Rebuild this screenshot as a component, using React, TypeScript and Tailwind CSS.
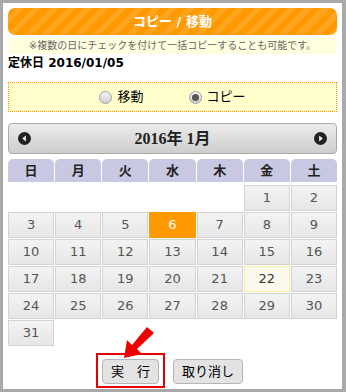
import React from "react";

const jp = "font-['DejaVu_Sans','Noto_Sans_CJK_JP',sans-serif]";

function Radio({ checked }: { checked: boolean }) {
  return (
    <span className="relative inline-flex h-[13px] w-[13px] items-center justify-center rounded-full border border-[#a0a0a0] bg-[linear-gradient(#f4f4f4,#cfcfcf)]">
      {checked && <span className="h-[7px] w-[7px] rounded-full bg-[#555]" />}
    </span>
  );
}

function Arrow({ dir }: { dir: "l" | "r" }) {
  return (
    <svg width="13" height="13" viewBox="0 0 13 13">
      <circle cx="6.5" cy="6.5" r="6.5" fill="#222" />
      {dir === "l" ? (
        <polygon points="7.8,3.6 4.3,6.5 7.8,9.4" fill="#fff" />
      ) : (
        <polygon points="5.2,3.6 8.7,6.5 5.2,9.4" fill="#fff" />
      )}
    </svg>
  );
}

export default function App() {
  const weekdays = ["日", "月", "火", "水", "木", "金", "土"];
  const cells: (number | null)[] = [null, null, null, null, null];
  for (let i = 1; i <= 31; i++) cells.push(i);

  return (
    <div className={`w-[346px] h-[392px] bg-white border-t-[3px] border-l-[3px] border-b-[3px] border-r-[4px] border-[#a9a9a9] pl-[5px] pr-[5px] pt-[5px] relative ${jp}`}>
      {/* header */}
      <div className="h-[27px] rounded-[7px] bg-[image:repeating-linear-gradient(135deg,#ff9900_0px,#ff9900_6px,#ffa41f_6px,#ffa41f_12px)] flex items-center justify-center text-white font-bold text-[13px]">
        コピー / 移動
      </div>
      {/* notice */}
      <div className="mt-[3px] h-[16px] bg-[#ffffe0] flex items-center justify-center text-[10px] text-[#666] leading-none">
        ※複数の日にチェックを付けて一括コピーすることも可能です。
      </div>
      <div className="mt-[2px] text-[12px] font-bold text-black leading-[14px]">
        定休日 2016/01/05
      </div>
      {/* radio box */}
      <div className="mt-[12px] h-[30px] border border-dotted border-[#ff9900] bg-[#ffffcc] flex items-center justify-center gap-[45px] text-[13px] text-black">
        <label className="flex items-center gap-[5px]">
          <Radio checked={false} />
          <span>移動</span>
        </label>
        <label className="flex items-center gap-[5px]">
          <Radio checked={true} />
          <span>コピー</span>
        </label>
      </div>
      {/* calendar header */}
      <div className="mt-[11px] h-[31px] rounded-[4px] border border-[#aaaaaa] bg-[linear-gradient(#ececec,#cdcdcd)] flex items-center justify-between px-[9px]">
        <Arrow dir="l" />
        <span className="font-['Liberation_Serif','Noto_Sans_CJK_JP',serif] font-bold text-[16px] text-[#222]">
          2016年 1月
        </span>
        <Arrow dir="r" />
      </div>
      {/* weekdays */}
      <div className="mt-[5px] grid grid-cols-7 gap-x-[1px]">
        {weekdays.map((w) => (
          <div
            key={w}
            className="h-[23px] rounded-t-[5px] bg-[#c8c8e2] flex items-center justify-center text-[13px] font-bold text-[#222]"
          >
            {w}
          </div>
        ))}
      </div>
      {/* days */}
      <div className="mt-[3px] grid grid-cols-7 gap-x-[1px] gap-y-[1px]">
        {cells.map((d, i) => {
          if (d === null) return <div key={i} className="h-[26px]" />;
          let cls =
            "border-[#d3d3d3] bg-[linear-gradient(#f3f3f3,#e6e6e6)] text-[#555]";
          if (d === 6) cls = "border-[#ff9900] bg-[#ff9900] text-white";
          if (d === 22) cls = "border-[#fcefa1] bg-[#fbf9ee] text-[#363636]";
          return (
            <div
              key={i}
              className={`h-[26px] border flex items-center justify-center text-[13px] font-['DejaVu_Sans',sans-serif] ${cls}`}
            >
              {d}
            </div>
          );
        })}
      </div>
      {/* buttons */}
      <div className="mt-[7px] pr-[6px] flex items-start justify-center gap-[8px]">
        <div className="border-2 border-[#e60000] px-[4px] pt-[4px] pb-[2px]">
          <button className="h-[25px] w-[57px] rounded-[4px] border border-[#b5b5b5] bg-[#e3e3e3] text-[13px] text-black">
            実　行
          </button>
        </div>
        <button className="mt-[6px] h-[25px] w-[70px] rounded-[4px] border border-[#b5b5b5] bg-[#e3e3e3] text-[13px] text-black">
          取り消し
        </button>
      </div>
      {/* red arrow */}
      <svg
        className="absolute left-[110px] top-[322px]"
        width="45"
        height="38"
        viewBox="0 0 45 38"
      >
        <polygon
          points="34,2 41,8 24,24 29,29 11,33 14,15 19,20"
          fill="#ee0000"
        />
      </svg>
    </div>
  );
}
